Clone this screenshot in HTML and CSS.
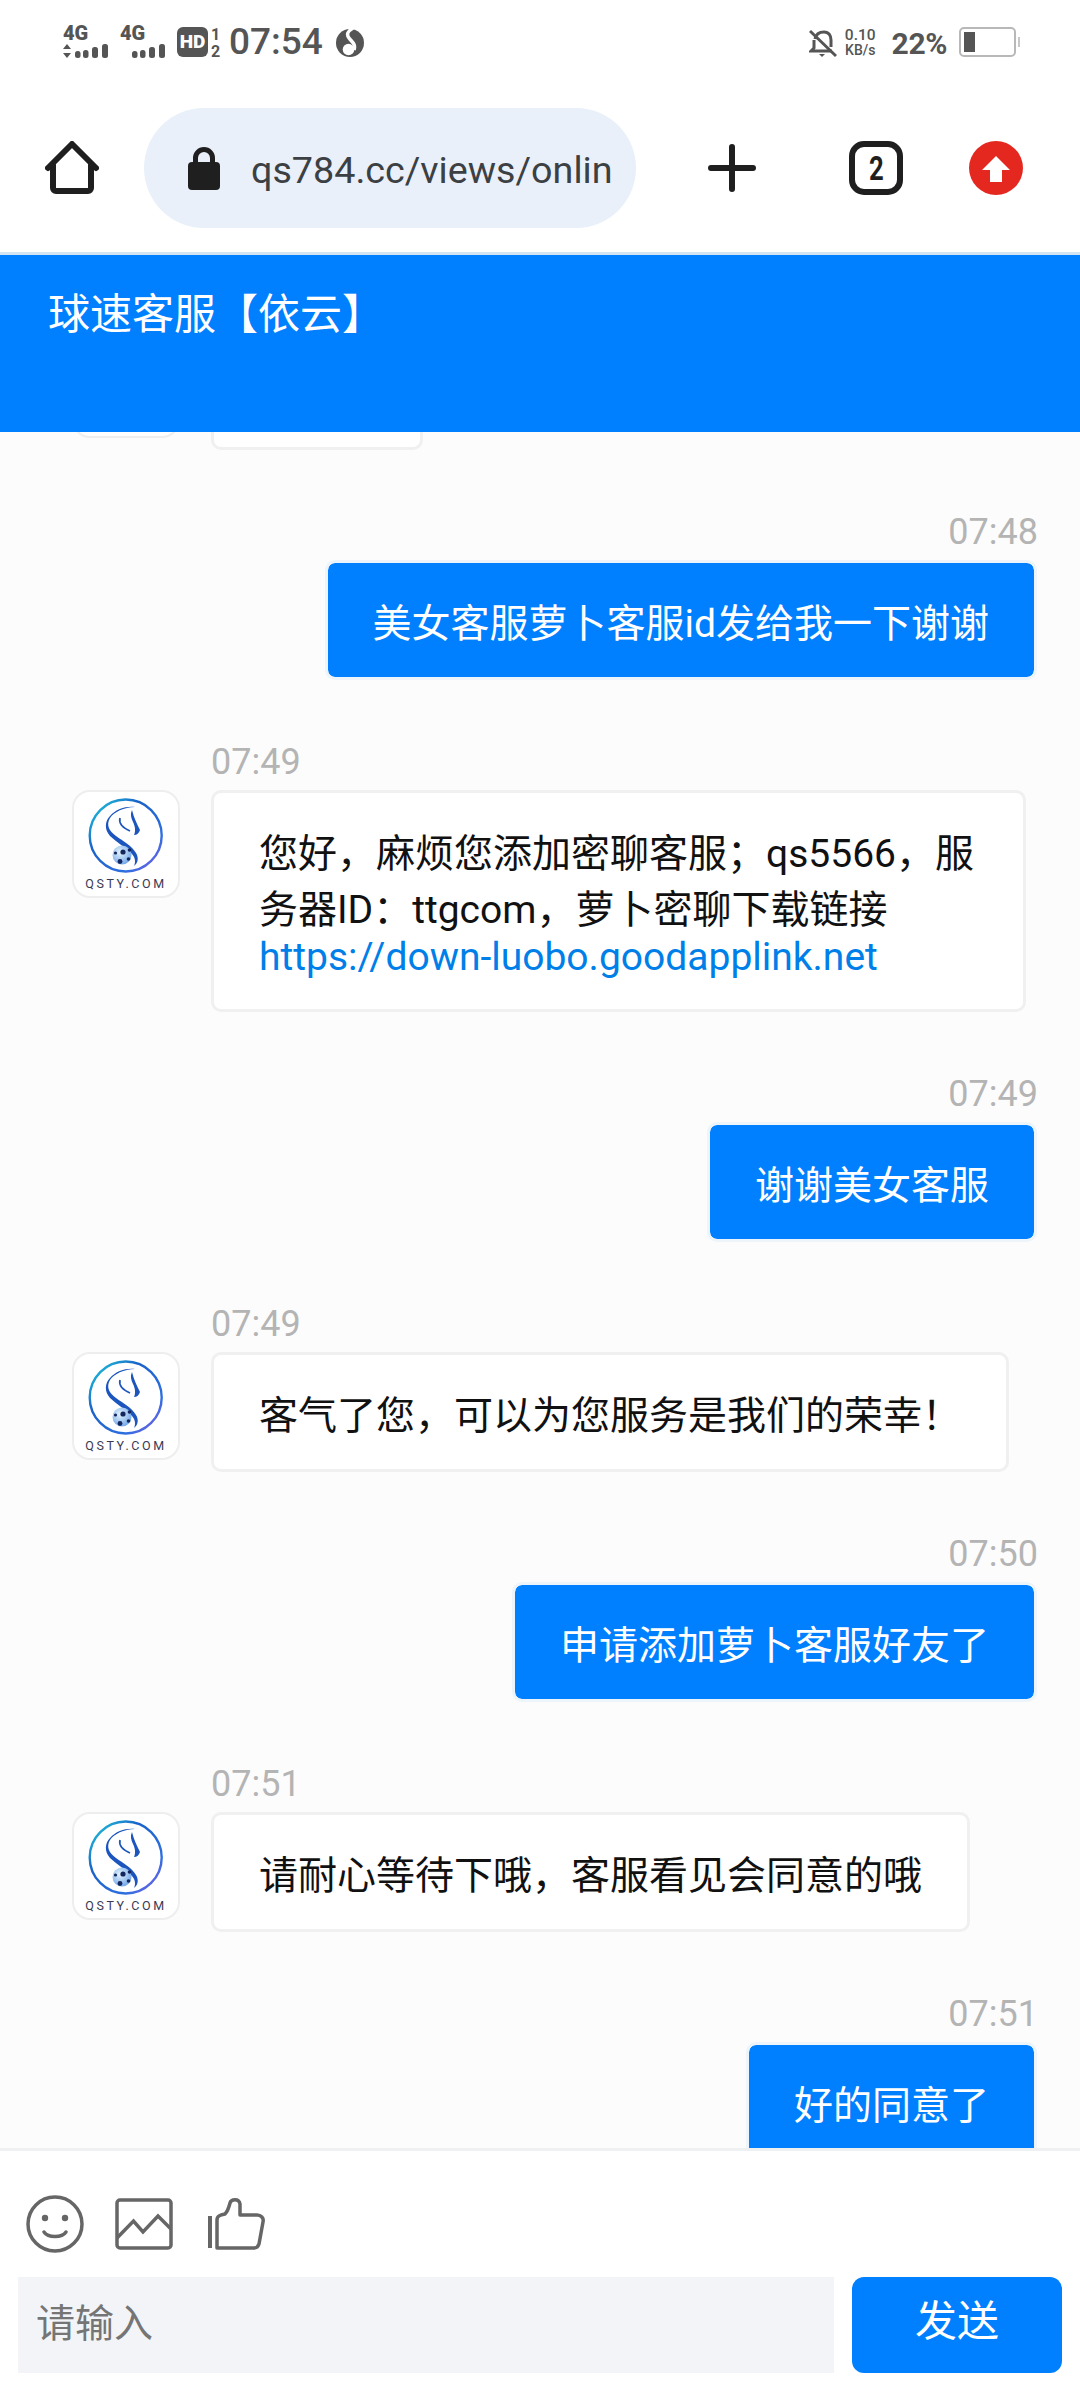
FILE: index.html
```html
<!DOCTYPE html>
<html lang="zh-CN">
<head>
<meta charset="utf-8">
<title>球速客服</title>
<link rel="stylesheet" href="styles.css">
</head>
<body>
<svg class="defs" width="0" height="0" aria-hidden="true">
  <defs>
    <linearGradient id="ring" x1="0" y1="0" x2="1" y2="1">
      <stop offset="0" stop-color="#1fd6dc"/>
      <stop offset=".35" stop-color="#1a62c8"/>
      <stop offset=".75" stop-color="#2f6fe0"/>
      <stop offset="1" stop-color="#8a5ae6"/>
    </linearGradient>
    <radialGradient id="ball" cx=".4" cy=".35" r=".7">
      <stop offset="0" stop-color="#e4f3fb"/>
      <stop offset="1" stop-color="#6ea4ea"/>
    </radialGradient>
    <symbol id="logo" viewBox="2 2 104 84">
      <circle cx="53.700" cy="45.500" r="36" fill="none" stroke="url(#ring)" stroke-width="2.400"/>
      <path d="M63 17C52 17 42 22 38 28 34 35 37 41 44 46 51 51 60 56 64 63 67 68 66 73 62 76 64 71 63 67 59 63 53 57 44 52 38 46 32 39 33 31 38 26 44 19 54 16 63 17Z" fill="#1c55bd"/>
      <path d="M48 28C47 32 49 37 58 41" fill="none" stroke="#1c55bd" stroke-width="1.700"/>
      <path d="M60 20C62 28 65 34 68 40 67 43 65 45 62 45 64 41 63 36 61 32 59 28 58 24 60 20Z" fill="#1c55bd"/>
      <circle cx="50" cy="65" r="9.500" fill="url(#ball)"/>
      <circle cx="51" cy="62" r="2.600" fill="#14265e"/>
      <circle cx="43.500" cy="63" r="1.600" fill="#14265e"/>
      <circle cx="57.500" cy="60" r="1.800" fill="#14265e"/>
      <circle cx="48" cy="71.500" r="2.400" fill="#14265e"/>
      <circle cx="56.500" cy="69" r="1.800" fill="#14265e"/>
    </symbol>
  </defs>
</svg>
<div class="phone">
  <div class="status">
    <div class="status-left">
      <div class="sim">
        <span class="net">4G</span>
        <svg class="signal" width="47" height="16" viewBox="0 0 47 16"><path d="M0 6 4 1 8 6ZM0 10H8L4 15Z" fill="#555"/><rect x="12" y="8" width="5.500" height="7" rx="2.500" fill="#555"/><rect x="20" y="7" width="5.500" height="8" rx="2.500" fill="#555"/><rect x="29" y="4" width="6" height="11" rx="2.500" fill="#555"/><rect x="39" y="1" width="6" height="14" rx="2.500" fill="#555"/></svg>
      </div>
      <div class="sim sim-b">
        <span class="net">4G</span>
        <svg class="signal signal-b" width="35" height="16" viewBox="0 0 35 16"><rect x="0" y="8" width="5.500" height="7" rx="2.500" fill="#555"/><rect x="8" y="7" width="5.500" height="8" rx="2.500" fill="#555"/><rect x="17" y="4" width="6" height="11" rx="2.500" fill="#555"/><rect x="27" y="1" width="6" height="14" rx="2.500" fill="#555"/></svg>
      </div>
      <span class="hd">HD</span>
      <div class="hd-nums"><span>1</span><span>2</span></div>
      <span class="clock">07:54</span>
      <svg class="app-dot" width="28" height="30" viewBox="0 0 28 30"><circle cx="14" cy="16" r="14" fill="#555"/><path d="M17 1C12 4 10 7 13 11 16 15 20 17 18 23" fill="none" stroke="#fff" stroke-width="3.500"/><circle cx="12.500" cy="22.500" r="5.800" fill="#fff"/></svg>
    </div>
    <div class="status-right">
      <svg class="bell" width="28" height="30" viewBox="0 0 28 30"><path d="M6 11C7 6 10 4 15 4 20 4 22 8 22 12V19M5 12V20L2 23H23" fill="none" stroke="#555" stroke-width="3"/><path d="M10 26H16L13 29Z" fill="#555"/><path d="M1 3 27 28" stroke="#555" stroke-width="3"/></svg>
      <div class="speed"><span>0.10</span><span class="speed-unit">KB/s</span></div>
      <span class="pct">22%</span>
      <div class="battery"><div class="battery-fill"></div></div>
      <div class="battery-nub"></div>
    </div>
  </div>

  <div class="toolbar">
    <svg class="home" width="54" height="54" viewBox="0 0 54 54"><path d="M3 27 27 3 51 27M8 24V47A3 3 0 0 0 11 50H43A3 3 0 0 0 46 47V24" fill="none" stroke="#1f1f1f" stroke-width="6" stroke-linecap="round" stroke-linejoin="round"/></svg>
    <div class="url-pill">
      <svg class="lock" width="32" height="43" viewBox="0 0 32 43"><path d="M7.500 18V11A8.500 8.500 0 0 1 24.500 11V18" fill="none" stroke="#1f1f1f" stroke-width="5"/><rect x="0" y="15" width="32" height="28" rx="4" fill="#1f1f1f"/></svg>
      <span class="url">qs784.cc/views/onlin</span>
    </div>
    <svg class="plus" width="48" height="48" viewBox="0 0 48 48"><path d="M3 24H45M24 3V45" stroke="#1f1f1f" stroke-width="6" stroke-linecap="round"/></svg>
    <div class="tabs"><span>2</span></div>
    <svg class="upgrade" width="54" height="54" viewBox="0 0 54 54"><circle cx="27" cy="27" r="27" fill="#e5281f"/><path d="M27 15 41 29H33V41H21V29H13Z" fill="#fff"/></svg>
  </div>

  <header class="title-bar">球速客服【依云】</header>

  <main class="chat">
    <div class="row they first">
      <div class="avatar avatar-clip"></div>
      <div class="col">
        <div class="bubble bubble-they bubble-stub"></div>
      </div>
    </div>

    <div class="row me">
      <time class="stamp">07:48</time>
      <div class="bubble bubble-me">美女客服萝卜客服id发给我一下谢谢</div>
    </div>

    <div class="row they">
      <div class="avatar"><svg class="logo" viewBox="0 0 104 84"><use href="#logo" width="104" height="84"/></svg><span class="logo-text">QSTY.COM</span></div>
      <div class="col">
        <time class="stamp">07:49</time>
        <div class="bubble bubble-they">您好，麻烦您添加密聊客服；qs5566，服务器ID：ttgcom，萝卜密聊下载链接 <a class="link">https://down-luobo.goodapplink.net</a></div>
      </div>
    </div>

    <div class="row me">
      <time class="stamp">07:49</time>
      <div class="bubble bubble-me">谢谢美女客服</div>
    </div>

    <div class="row they">
      <div class="avatar"><svg class="logo" viewBox="0 0 104 84"><use href="#logo" width="104" height="84"/></svg><span class="logo-text">QSTY.COM</span></div>
      <div class="col">
        <time class="stamp">07:49</time>
        <div class="bubble bubble-they">客气了您，可以为您服务是我们的荣幸！</div>
      </div>
    </div>

    <div class="row me">
      <time class="stamp">07:50</time>
      <div class="bubble bubble-me">申请添加萝卜客服好友了</div>
    </div>

    <div class="row they">
      <div class="avatar"><svg class="logo" viewBox="0 0 104 84"><use href="#logo" width="104" height="84"/></svg><span class="logo-text">QSTY.COM</span></div>
      <div class="col">
        <time class="stamp">07:51</time>
        <div class="bubble bubble-they">请耐心等待下哦，客服看见会同意的哦</div>
      </div>
    </div>

    <div class="row me">
      <time class="stamp">07:51</time>
      <div class="bubble bubble-me">好的同意了</div>
    </div>
  </main>

  <footer class="composer">
    <div class="tools">
      <svg width="58" height="58" viewBox="0 0 58 58"><circle cx="29" cy="29" r="27" fill="none" stroke="#666" stroke-width="3.500"/><circle cx="19" cy="23" r="3.200" fill="#666"/><circle cx="39" cy="23" r="3.200" fill="#666"/><path d="M18 37C22 43 36 43 40 37" fill="none" stroke="#666" stroke-width="3.500" stroke-linecap="round"/></svg>
      <svg width="58" height="52" viewBox="0 0 58 52"><rect x="2" y="2" width="54" height="48" rx="3" fill="none" stroke="#666" stroke-width="3.500"/><path d="M2 40 18.500 23 28 34 43 18 56 31" fill="none" stroke="#666" stroke-width="3.500"/></svg>
      <svg width="57" height="52" viewBox="0 0 57 52"><path d="M2 18V50" stroke="#666" stroke-width="4"/><path d="M9 50V22C9 18 12 17 17 16 20 13 21 9 22 5 23 1 31 0 32 6V17H49C53 17 56 20 55 24L51 46C50 49 48 50 46 50Z" fill="none" stroke="#666" stroke-width="3.500" stroke-linejoin="round"/></svg>
    </div>
    <div class="send-row">
      <div class="field">请输入</div>
      <div class="send">发送</div>
    </div>
  </footer>
</div>
</body>
</html>
```

FILE: styles.css
```css
* { box-sizing: border-box; }
html, body { margin: 0; padding: 0; }
body {
  width: 1080px;
  height: 2408px;
  overflow: hidden;
  background: #fff;
  font-family: Roboto, "Noto Sans CJK SC", sans-serif;
}
.defs { position: absolute; }
.phone {
  width: 1080px;
  height: 2408px;
  display: flex;
  flex-direction: column;
}

/* status bar */
.status {
  height: 84px;
  padding: 26px 60px 0 63px;
  display: flex;
  justify-content: space-between;
  align-items: flex-start;
  color: #555;
  flex: none;
}
.status-left, .status-right { display: flex; align-items: flex-start; }
.sim { display: flex; flex-direction: column; width: 47px; }
.sim-b { width: 47px; margin-left: 10px; }
.net { font-size: 20px; font-weight: 900; line-height: 15px; height: 17px; letter-spacing: -.2px; }
.signal { display: block; }
.signal-b { margin-left: 12px; }
.hd {
  width: 31px; height: 30px; margin: 1px 0 0 10px;
  background: #555; color: #fff; border-radius: 6px;
  font-size: 19px; font-weight: 900; line-height: 30px; text-align: center;
}
.hd-nums {
  display: flex; flex-direction: column; align-items: center;
  width: 11px; margin: 0 0 0 2px;
  font-size: 16px; font-weight: 700; line-height: 17px; color: #555;
}
.clock { font-size: 37px; font-weight: 500; line-height: 32px; margin-left: 8px; }
.app-dot { margin: 1px 0 0 13px; }
.bell { margin: 2px 0 0 0; }
.speed {
  display: flex; flex-direction: column; align-items: center;
  margin: 2px 0 0 8px;
  font-size: 15.500px; font-weight: 500; line-height: 15px;
}
.speed-unit { font-size: 14px; }
.pct { font-size: 30px; font-weight: 700; line-height: 36px; margin: 0 0 0 16px; letter-spacing: -.4px; }
.battery {
  width: 57px; height: 30px; margin: 1px 0 0 12px; padding: 3px;
  border: 2.500px solid #b8b8b8; border-radius: 5px;
}
.battery-fill { width: 11px; height: 100%; background: #555; }
.battery-nub { width: 2px; height: 10px; margin: 11px 0 0 2px; background: #c8c8c8; }

/* browser toolbar */
.toolbar {
  height: 171px;
  flex: none;
  display: flex;
  align-items: flex-start;
  padding: 24px 0 0 45px;
  border-bottom: 3px solid #d3e4f2;
}
.home { margin-top: 33px; }
.url-pill {
  width: 492px; height: 120px;
  margin-left: 45px; padding: 0 23px 0 44px;
  border-radius: 60px;
  background: #e9f0fa;
  display: flex; align-items: center;
  overflow: hidden;
}
.lock { flex: none; }
.url {
  margin: 3px 0 0 31px;
  font-size: 37.700px; color: #3c4043;
  white-space: nowrap;
}
.plus { margin: 36px 0 0 72px; }
.tabs {
  width: 54px; height: 54px; margin: 33px 0 0 93px;
  border: 6px solid #1f1f1f; border-radius: 15px;
  display: flex; align-items: center; justify-content: center;
  color: #1f1f1f; font-size: 33px; font-weight: 700;
}
.tabs span { transform: scaleX(.78); }
.upgrade { margin: 33px 0 0 66px; }

/* title */
.title-bar {
  height: 177px;
  flex: none;
  padding: 29px 0 0 48px;
  background: #007fff;
  color: #fff;
  font-size: 42px;
  line-height: 62px;
  position: relative;
  z-index: 1;
}

/* chat */
.chat {
  flex: 1;
  min-height: 0;
  overflow: hidden;
  background: #fcfcfc;
  display: flex;
  flex-direction: column;
  gap: 61px;
  border-bottom: 3px solid #eff0f2;
}
.row { flex: none; display: flex; }
.me { flex-direction: column; align-items: flex-end; padding-right: 43px; }
.they { padding-left: 72px; gap: 31px; align-items: flex-start; }
.first { margin-top: -102px; }
.col { display: flex; flex-direction: column; align-items: flex-start; }
.stamp {
  font-size: 36px; line-height: 42px; height: 42px; margin-bottom: 7px;
  color: #b4b4b4;
}
.me .stamp { margin-right: -1px; }
.bubble {
  font-size: 39px;
  border-radius: 10px;
  border: 3px solid;
  padding: 29px 45px;
}
.bubble-me { background: #007fff; color: #fff; border-color: #edf5fb; background-clip: padding-box; }
.bubble-they { background: #fff; color: #111; border-color: #f0f0f0; max-width: 815px; }
.bubble-stub { width: 212px; height: 120px; }
.link { color: #007fe8; }

/* avatar */
.avatar {
  width: 108px; height: 108px; margin-top: 49px; flex: none;
  background: #fff;
  border: 2px solid #eee;
  border-radius: 18px;
  display: flex; flex-direction: column; align-items: center;
  overflow: hidden;
}
.avatar-clip { margin-top: 0; }
.logo { width: 104px; height: 84px; flex: none; }
.logo-text {
  font-size: 12.500px; letter-spacing: 2.600px; line-height: 16px; color: #3a3a55;
  white-space: nowrap;
}

/* composer */
.composer { flex: none; height: 257px; background: #fff; padding: 44px 18px 0; }
.tools { display: flex; align-items: center; gap: 31px; padding-left: 8px; height: 58px; }
.tools svg:nth-child(3) { margin-left: 4px; }
.send-row { display: flex; gap: 18px; margin-top: 24px; }
.field {
  flex: 1; height: 96px; padding-left: 18px;
  background: #f2f4f8; color: #757575;
  font-size: 39px; line-height: 94px;
}
.send {
  width: 210px; height: 96px; border-radius: 12px;
  background: #007fff; color: #fff;
  font-size: 42px; line-height: 90px; text-align: center;
}
```
